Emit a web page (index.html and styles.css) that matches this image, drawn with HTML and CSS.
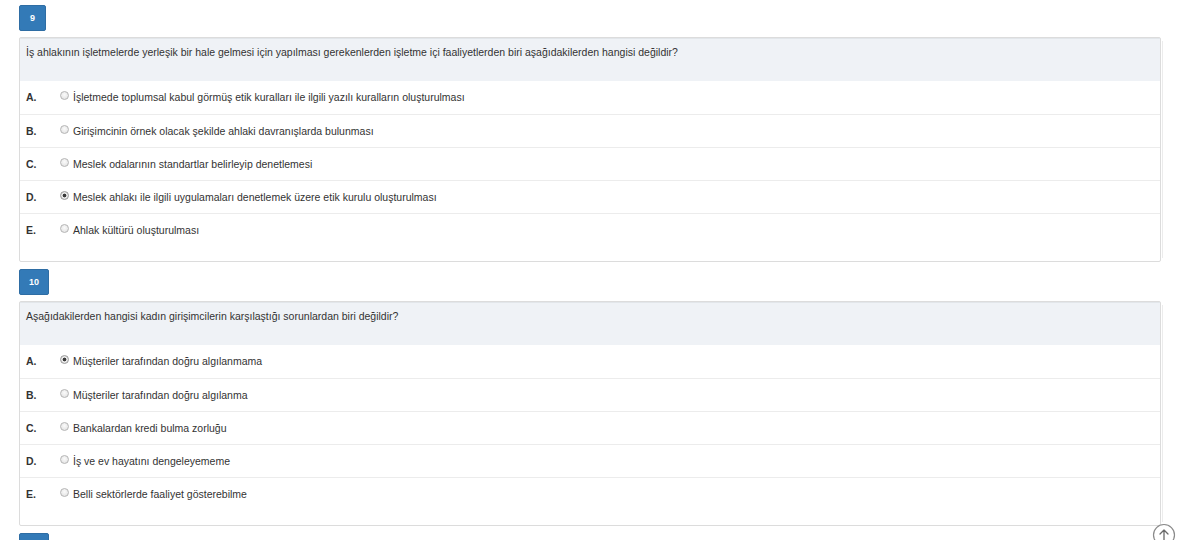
FILE: index.html
```html
<!DOCTYPE html>
<html lang="tr">
<head>
<meta charset="utf-8">
<title>Sorular</title>
<link rel="stylesheet" href="styles.css">
</head>
<body>
<div class="page">
  <section class="question">
    <div class="qnum">9</div>
    <div class="panel">
      <div class="panel-heading">İş ahlakının işletmelerde yerleşik bir hale gelmesi için yapılması gerekenlerden işletme içi faaliyetlerden biri aşağıdakilerden hangisi değildir?</div>
      <ul class="options">
        <li class="option"><span class="letter">A.</span><span class="radio"></span><span class="text">İşletmede toplumsal kabul görmüş etik kuralları ile ilgili yazılı kuralların oluşturulması</span></li>
        <li class="option"><span class="letter">B.</span><span class="radio"></span><span class="text">Girişimcinin örnek olacak şekilde ahlaki davranışlarda bulunması</span></li>
        <li class="option"><span class="letter">C.</span><span class="radio"></span><span class="text">Meslek odalarının standartlar belirleyip denetlemesi</span></li>
        <li class="option"><span class="letter">D.</span><span class="radio checked"></span><span class="text">Meslek ahlakı ile ilgili uygulamaları denetlemek üzere etik kurulu oluşturulması</span></li>
        <li class="option"><span class="letter">E.</span><span class="radio"></span><span class="text">Ahlak kültürü oluşturulması</span></li>
      </ul>
    </div>
  </section>
  <section class="question">
    <div class="qnum">10</div>
    <div class="panel">
      <div class="panel-heading">Aşağıdakilerden hangisi kadın girişimcilerin karşılaştığı sorunlardan biri değildir?</div>
      <ul class="options">
        <li class="option"><span class="letter">A.</span><span class="radio checked"></span><span class="text">Müşteriler tarafından doğru algılanmama</span></li>
        <li class="option"><span class="letter">B.</span><span class="radio"></span><span class="text">Müşteriler tarafından doğru algılanma</span></li>
        <li class="option"><span class="letter">C.</span><span class="radio"></span><span class="text">Bankalardan kredi bulma zorluğu</span></li>
        <li class="option"><span class="letter">D.</span><span class="radio"></span><span class="text">İş ve ev hayatını dengeleyememe</span></li>
        <li class="option"><span class="letter">E.</span><span class="radio"></span><span class="text">Belli sektörlerde faaliyet gösterebilme</span></li>
      </ul>
    </div>
  </section>
  <section class="question">
    <div class="qnum qnum-next"></div>
  </section>
</div>
<a class="to-top" href="#" aria-label="Yukarı">
  <svg width="24" height="24" viewBox="0 0 24 24"><circle cx="12" cy="12" r="10.5" fill="#fff" stroke="#8a8a8a" stroke-width="1.2"/><path d="M12 17.5V7M8 11l4-4 4 4" fill="none" stroke="#6a6a6a" stroke-width="1.3" stroke-linecap="round" stroke-linejoin="round"/></svg>
</a>
</body>
</html>
```

FILE: styles.css
```css
html, body {
  margin: 0;
  padding: 0;
  background: #fff;
}
body {
  font-family: "Liberation Sans", Arial, sans-serif;
  font-size: 10.5px;
  color: #333;
  overflow: hidden;
}
.page {
  padding: 5px 16px 0 19px;
}
.question {
  display: flex;
  flex-direction: column;
  align-items: flex-start;
  gap: 6px;
  margin-bottom: 7px;
}
.qnum {
  box-sizing: border-box;
  height: 26px;
  min-width: 27px;
  padding: 0 9px;
  display: flex;
  align-items: center;
  justify-content: center;
  background: #337ab7;
  border: 1px solid #2e6da4;
  border-radius: 2px;
  color: #fff;
  font-weight: bold;
  font-size: 9px;
}
.qnum-next {
  width: 30px;
}
.panel {
  box-sizing: border-box;
  align-self: stretch;
  border: 1px solid #dcdcdc;
  border-radius: 2px;
  background: #fff;
  box-shadow: 5px 0 0 -4px #fff, 6px 0 0 -4px #ececec;
}
.panel-heading {
  height: 43px;
  box-sizing: border-box;
  padding: 5px 6px 0 6px;
  line-height: 16px;
  background: #eff2f6;
  border-top: 1px solid #e2e6ea;
}
.options {
  list-style: none;
  margin: 0;
  padding: 0 0 15px 0;
}
.option {
  height: 33px;
  box-sizing: border-box;
  display: flex;
  align-items: center;
  padding-left: 6px;
  padding-bottom: 1px;
  border-top: 1px solid #ececec;
}
.option:first-child {
  border-top: none;
}
.letter {
  width: 34px;
  font-weight: bold;
  color: #333;
}
.radio {
  box-sizing: border-box;
  width: 9px;
  height: 9px;
  border-radius: 50%;
  border: 1px solid #b5b5b5;
  background: radial-gradient(circle at 50% 40%, #fbfbfb, #dedede);
  margin-right: 4px;
  margin-top: -3px;
}
.radio.checked {
  border-color: #9a9a9a;
  background: radial-gradient(circle, #3a3a3a 0 1.6px, #ececec 2.2px, #d8d8d8);
}
.text {
  color: #333;
}
.to-top {
  position: fixed;
  right: 1px;
  bottom: -7px;
  width: 24px;
  height: 24px;
  display: block;
}
```
